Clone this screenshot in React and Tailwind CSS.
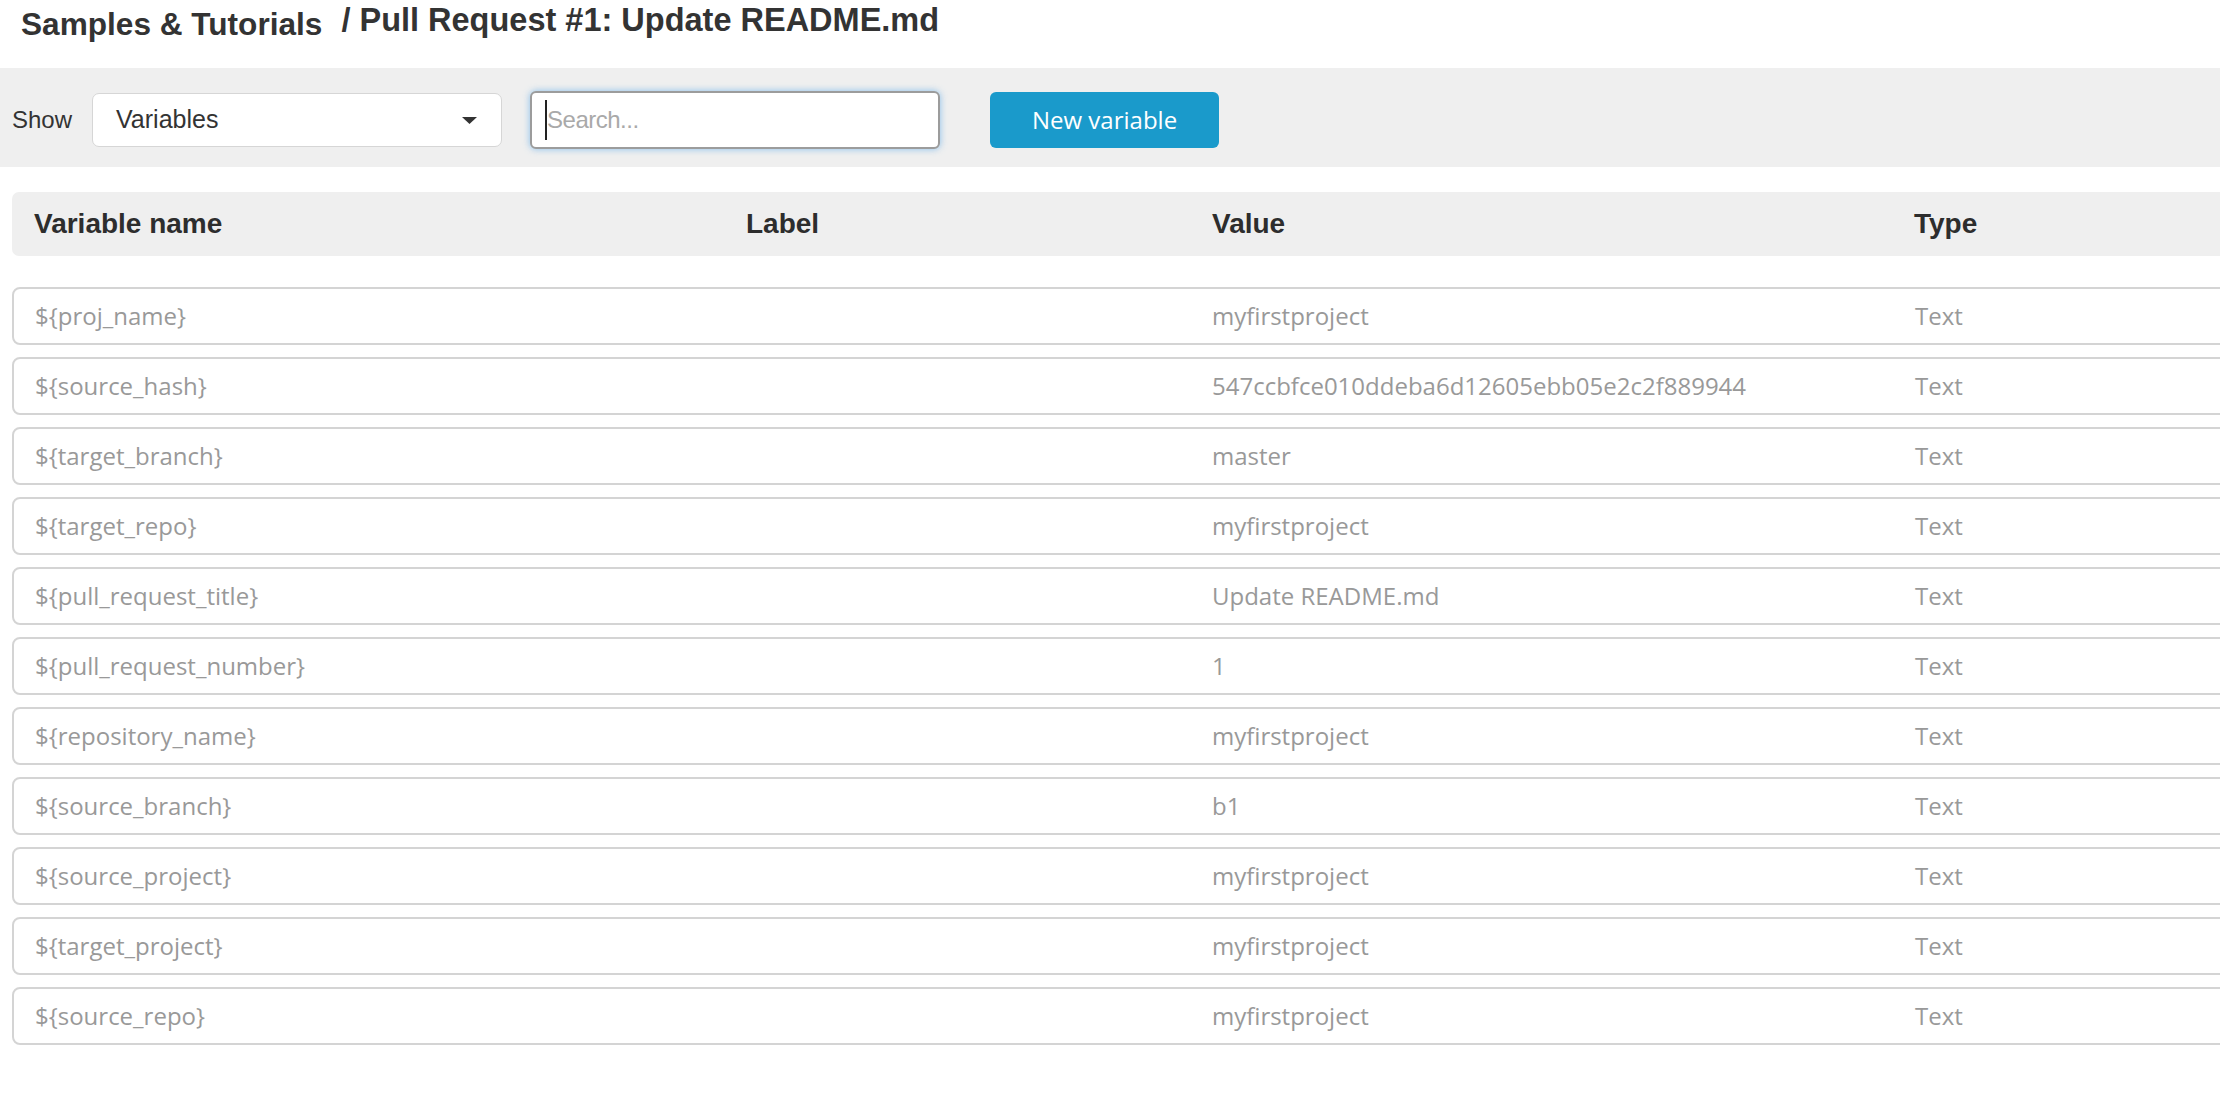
// Variables list page — toolbar + table of pipeline variables
const variables = [
  { name: "${proj_name}", label: "", value: "myfirstproject", type: "Text" },
  { name: "${source_hash}", label: "", value: "547ccbfce010ddeba6d12605ebb05e2c2f889944", type: "Text" },
  { name: "${target_branch}", label: "", value: "master", type: "Text" },
  { name: "${target_repo}", label: "", value: "myfirstproject", type: "Text" },
  { name: "${pull_request_title}", label: "", value: "Update README.md", type: "Text" },
  { name: "${pull_request_number}", label: "", value: "1", type: "Text" },
  { name: "${repository_name}", label: "", value: "myfirstproject", type: "Text" },
  { name: "${source_branch}", label: "", value: "b1", type: "Text" },
  { name: "${source_project}", label: "", value: "myfirstproject", type: "Text" },
  { name: "${target_project}", label: "", value: "myfirstproject", type: "Text" },
  { name: "${source_repo}", label: "", value: "myfirstproject", type: "Text" },
];

const cols = "grid grid-cols-[712px_466px_702px_1fr] items-center";

function Toolbar() {
  return (
    <div className="flex h-[99px] items-center bg-[#efefef] pl-[12px] pt-[5px] font-['Liberation_Sans',Arial,sans-serif] text-[24px] text-[#333]">
      <span className="mr-[20px]">Show</span>

      {/* Select */}
      <div className="flex h-[54px] w-[410px] items-center justify-between rounded-[7px] border-[1.5px] border-[#d6d6d6] bg-white pl-[23px] pr-[24px]">
        <span className="text-[25px]">Variables</span>
        <svg width="15" height="7" viewBox="0 0 15 7" className="mt-[1px]">
          <path d="M0 0 H15 L7.5 7 Z" fill="#333" />
        </svg>
      </div>

      {/* Search */}
      <div className="ml-[28px] flex h-[58px] w-[410px] items-center rounded-[6px] border-2 border-[#9c9c9c] bg-white pl-[13px] shadow-[0_0_7px_rgba(102,175,233,0.75)]">
        <span className="h-[40px] w-[2px] bg-[#222]" />
        <span className="tracking-[-0.5px] text-[#a9a9a9]">Search...</span>
      </div>

      <button className="ml-[50px] h-[56px] w-[229px] rounded-[6px] bg-[#1a9acb] font-['Open_Sans',sans-serif] text-[24px] text-white">
        New variable
      </button>
    </div>
  );
}

function App() {
  return (
    <div className="h-[1108px] w-[2220px] overflow-hidden bg-white">
      {/* Breadcrumb title */}
      <div className="flex h-[68px] items-start pl-[21px] pt-[7px] font-['Liberation_Sans',Arial,sans-serif] font-bold leading-[34px] text-[#333]">
        <span className="text-[31.6px]">Samples &amp; Tutorials</span>
        <span className="ml-[19px] -mt-[4px] text-[32.5px]">/ Pull Request #1: Update README.md</span>
      </div>

      <Toolbar />

      {/* Table */}
      <div className="ml-[12px] mt-[25px] w-[2260px]">
        <div className={`${cols} h-[64px] rounded-l-[7px] bg-[#efefef] px-[22px] font-['Liberation_Sans',Arial,sans-serif] text-[28px] font-bold text-[#2d2d2d]`}>
          <span>Variable name</span>
          <span>Label</span>
          <span>Value</span>
          <span>Type</span>
        </div>

        <div className="mt-[31px] flex flex-col gap-[12px]">
          {variables.map((v) => (
            <div
              key={v.name}
              className={`${cols} h-[58px] rounded-l-[8px] border-2 border-[#d4d4d4] bg-white px-[21px] font-['Open_Sans',sans-serif] text-[24px] text-[#999]`}
            >
              <span>{v.name}</span>
              <span>{v.label}</span>
              <span className="-ml-[1px]">{v.value}</span>
              <span>{v.type}</span>
            </div>
          ))}
        </div>
      </div>
    </div>
  );
}

export default App;
